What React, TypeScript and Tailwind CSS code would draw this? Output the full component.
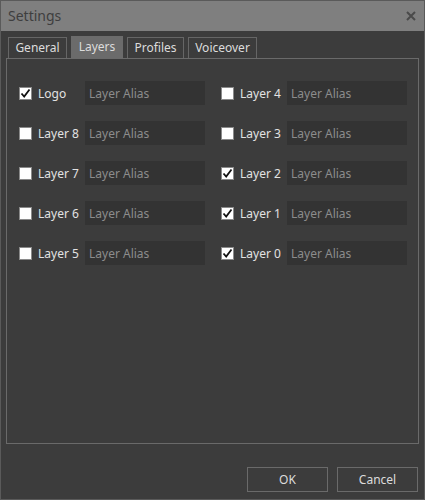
import { Fragment } from "react";

const left = [
  { name: "Logo", checked: true },
  { name: "Layer 8", checked: false },
  { name: "Layer 7", checked: false },
  { name: "Layer 6", checked: false },
  { name: "Layer 5", checked: false },
];

const right = [
  { name: "Layer 4", checked: false },
  { name: "Layer 3", checked: false },
  { name: "Layer 2", checked: true },
  { name: "Layer 1", checked: true },
  { name: "Layer 0", checked: true },
];

function Check({ checked }: { checked: boolean }) {
  return (
    <div className="w-[13px] h-[13px] bg-white border border-[#8a8a8a] flex items-center justify-center shrink-0">
      {checked && (
        <svg width="11" height="11" viewBox="0 0 11 11">
          <path d="M1.5 5.5 L4.2 8.5 L9.5 1.5" fill="none" stroke="#111" strokeWidth="1.8" />
        </svg>
      )}
    </div>
  );
}

function LayerRow({ name, checked }: { name: string; checked: boolean }) {
  return (
    <div className="flex items-center h-[24px]">
      <Check checked={checked} />
      <span className="ml-[6px] w-[47px] pt-[1px] text-[#e2e2e2]">{name}</span>
      <div className="w-[120px] h-[24px] bg-[#333333] flex items-center pl-[4px] pt-[1px] text-[#8c8c8c]">Layer Alias</div>
    </div>
  );
}

const tabs = ["General", "Layers", "Profiles", "Voiceover"];
const tabWidths = ["w-[59px]", "w-[52px]", "w-[57px]", "w-[69px]"];

export default function App() {
  return (
    <div
      className="w-[425px] h-[500px] bg-[#3c3c3c] border border-[#5a5a5a] flex flex-col text-[12px] leading-none"
      style={{ fontFamily: '"Noto Sans", "Open Sans", sans-serif' }}
    >
      {/* Title bar */}
      <div className="h-[30px] bg-[#7f7f7f] flex items-center justify-between pl-[7px] pr-[8px]">
        <span className="text-[14px] text-[#3e3e3e]">Settings</span>
        <svg width="10" height="10" viewBox="0 0 10 10">
          <path d="M1 1 L9 9 M9 1 L1 9" stroke="#4a4a4a" strokeWidth="2" />
        </svg>
      </div>

      {/* Tabs */}
      <div className="mt-[5px] pl-[7px] flex items-end gap-[4px] h-[22px]">
        {tabs.map((t, i) => (
          <div
            key={t}
            className={
              i === 1
                ? `${tabWidths[i]} h-[22px] bg-[#6b6b6b] flex items-center justify-center text-[#dcdcdc]`
                : `${tabWidths[i]} h-[21px] border border-b-0 border-[#666666] flex items-center justify-center text-[#dcdcdc]`
            }
          >
            {t}
          </div>
        ))}
      </div>

      {/* Panel */}
      <div className="ml-[5px] w-[413px] h-[386px] border border-[#6a6a6a] pt-[22px] pl-[12px]">
        <div className="grid grid-cols-[186px_186px] gap-x-[16px] gap-y-[16px]">
          {left.map((l, i) => (
            <Fragment key={l.name}>
              <LayerRow name={l.name} checked={l.checked} />
              <LayerRow name={right[i].name} checked={right[i].checked} />
            </Fragment>
          ))}
        </div>
      </div>

      {/* Buttons */}
      <div className="mt-[23px] flex justify-end gap-[9px] pr-[6px]">
        <button className="w-[81px] h-[25px] border border-[#6a6a6a] text-[#dcdcdc]">OK</button>
        <button className="w-[81px] h-[25px] border border-[#6a6a6a] text-[#dcdcdc]">Cancel</button>
      </div>
    </div>
  );
}
